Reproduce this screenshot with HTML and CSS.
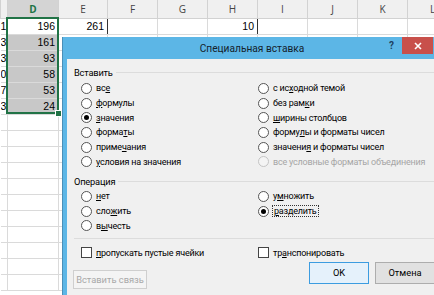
FILE: index.html
```html
<!DOCTYPE html>
<html lang="ru">
<head>
<meta charset="UTF-8">
<title>Специальная вставка</title>
<link rel="stylesheet" href="styles.css">
</head>
<body>

<!-- worksheet behind the dialog -->
<table class="sheet">
    <colgroup>
        <col class="w-c"><col class="w-d"><col class="w-e"><col class="w-n"><col class="w-n">
        <col class="w-n"><col class="w-n"><col class="w-n"><col class="w-n"><col class="w-n">
    </colgroup>
    <tr class="head">
        <th></th><th class="sel">D</th><th>E</th><th>F</th><th>G</th><th>H</th><th>I</th><th>J</th><th>K</th><th>L</th>
    </tr>
    <tr><td>1</td><td>196</td><td class="edge">261</td><td></td><td></td><td class="edge">10</td><td></td><td></td><td></td><td></td></tr>
    <tr><td>3</td><td class="g">161</td><td></td><td></td><td></td><td></td><td></td><td></td><td></td><td></td></tr>
    <tr><td>3</td><td class="g">93</td><td></td><td></td><td></td><td></td><td></td><td></td><td></td><td></td></tr>
    <tr><td>0</td><td class="g">58</td><td></td><td></td><td></td><td></td><td></td><td></td><td></td><td></td></tr>
    <tr><td>7</td><td class="g">53</td><td></td><td></td><td></td><td></td><td></td><td></td><td></td><td></td></tr>
    <tr><td>3</td><td class="g">24</td><td></td><td></td><td></td><td></td><td></td><td></td><td></td><td></td></tr>
    <tr><td></td><td></td><td></td><td></td><td></td><td></td><td></td><td></td><td></td><td></td></tr>
    <tr><td></td><td></td><td></td><td></td><td></td><td></td><td></td><td></td><td></td><td></td></tr>
    <tr><td></td><td></td><td></td><td></td><td></td><td></td><td></td><td></td><td></td><td></td></tr>
    <tr><td></td><td></td><td></td><td></td><td></td><td></td><td></td><td></td><td></td><td></td></tr>
    <tr><td></td><td></td><td></td><td></td><td></td><td></td><td></td><td></td><td></td><td></td></tr>
    <tr><td></td><td></td><td></td><td></td><td></td><td></td><td></td><td></td><td></td><td></td></tr>
    <tr><td></td><td></td><td></td><td></td><td></td><td></td><td></td><td></td><td></td><td></td></tr>
    <tr><td></td><td></td><td></td><td></td><td></td><td></td><td></td><td></td><td></td><td></td></tr>
    <tr><td></td><td></td><td></td><td></td><td></td><td></td><td></td><td></td><td></td><td></td></tr>
    <tr><td></td><td></td><td></td><td></td><td></td><td></td><td></td><td></td><td></td><td></td></tr>
    <tr><td></td><td></td><td></td><td></td><td></td><td></td><td></td><td></td><td></td><td></td></tr>
</table>

<!-- green selection frame D1:D6 -->
<div class="selection"><span class="handle"></span></div>

<!-- Paste special dialog -->
<div class="dialog">
    <div class="titlebar">
        <span class="title">Специальная вставка</span>
        <span class="help">?</span>
        <span class="close">
            <svg width="8" height="8" viewBox="0 0 8 8"><path d="M1 1L7 7M7 1L1 7" stroke="#fff" stroke-width="1.6"/></svg>
        </span>
    </div>

    <div class="body">
        <div class="group">Вставить</div>
        <div class="opts">
            <div class="opt"><i class="radio"></i>вс<u>е</u></div>
            <div class="opt"><i class="radio"></i>с ис<u>х</u>одной темой</div>
            <div class="opt"><i class="radio"></i><u>ф</u>ормулы</div>
            <div class="opt"><i class="radio"></i>без рам<u>к</u>и</div>
            <div class="opt"><i class="radio on"></i><u>з</u>начения</div>
            <div class="opt"><i class="radio"></i><u>ш</u>ирины столбцов</div>
            <div class="opt"><i class="radio"></i>форма<u>т</u>ы</div>
            <div class="opt"><i class="radio"></i>форму<u>л</u>ы и форматы чисел</div>
            <div class="opt"><i class="radio"></i>приме<u>ч</u>ания</div>
            <div class="opt"><i class="radio"></i>значени<u>я</u>&nbsp;и форматы чисел</div>
            <div class="opt"><i class="radio"></i><u>у</u>словия на значения</div>
            <div class="opt off"><i class="radio"></i>все условные форматы объединения</div>
        </div>

        <div class="group op">Операция</div>
        <div class="opts">
            <div class="opt"><i class="radio"></i><u>н</u>ет</div>
            <div class="opt"><i class="radio"></i>у<u>м</u>ножить</div>
            <div class="opt"><i class="radio"></i>сло<u>ж</u>ить</div>
            <div class="opt"><i class="radio on"></i><span class="focus"><u>р</u>азделить</span></div>
            <div class="opt"><i class="radio"></i>в<u>ы</u>честь</div>
            <div class="opt"></div>
        </div>

        <div class="sep"></div>

        <div class="opts">
            <div class="opt"><i class="check"></i><u>п</u>ропускать пустые ячейки</div>
            <div class="opt"><i class="check"></i>тр<u>а</u>нспонировать</div>
        </div>

        <div class="buttons">
            <button class="btn link" disabled>Вставить связь</button>
            <button class="btn ok">OK</button>
            <button class="btn">Отмена</button>
        </div>
    </div>
</div>

</body>
</html>
```

FILE: styles.css
```css
body {
    margin: 0;
    width: 434px;
    height: 295px;
    overflow: hidden;
    position: relative;
    background: #ffffff;
    font-family: Roboto, "Open Sans", sans-serif;
}

/* worksheet */
.sheet {
    border-collapse: collapse;
    table-layout: fixed;
    width: 458px;
    font-family: "Liberation Sans", Arial, sans-serif;
    font-size: 10.5px;
    color: #000;
}
.w-c { width: 7px; }
.w-d { width: 51px; }
.w-e { width: 49px; }
.w-n { width: 50px; }

.sheet tr { height: 16px; }
.sheet tr.head { height: 18px; }

.sheet th {
    padding: 0;
    background: #f0f0f0;
    border: 1px solid #d2d2d2;
    border-top: none;
    color: #444;
    font-family: "Open Sans", sans-serif;
    font-size: 10px;
    font-weight: normal;
}
.sheet th.sel {
    background: #d4d4d4;
    color: #217346;
    font-weight: bold;
    border-bottom: 2px solid #217346;
}

.sheet td {
    padding: 0 3px 0 0;
    border: 1px solid #dadada;
    text-align: right;
    white-space: nowrap;
    overflow: hidden;
    line-height: 14px;
}
.sheet td:first-child { padding-right: 2px; border-left: none; }
.sheet td.g {
    background: #c8c8c8;
    border-top-color: #8e8e8e;
}
.sheet td.edge { border-right-color: #333; }

/* selection frame over the sheet */
.selection {
    position: absolute;
    left: 6px;
    top: 17px;
    width: 49px;
    height: 93px;
    border: 2px solid #217346;
}
.handle {
    position: absolute;
    right: -5px;
    bottom: -5px;
    width: 5px;
    height: 5px;
    background: #217346;
    border: 1px solid #fff;
}

/* dialog */
.dialog {
    position: absolute;
    left: 62px;
    top: 37px;
    width: 378px;
    height: 280px;
    background: #5cb6e6;
    border-left: 1px solid #4a8fb8;
    display: flex;
    flex-direction: column;
}

.titlebar {
    height: 22px;
    position: relative;
}
.title {
    position: absolute;
    left: 0;
    right: 0;
    top: 6px;
    text-align: center;
    font-size: 10.2px;
    color: #14222c;
}
.help {
    position: absolute;
    left: 326px;
    top: 3px;
    font-size: 10px;
    font-weight: bold;
    color: #1d3e5e;
}
.close {
    position: absolute;
    left: 339px;
    top: 0;
    width: 31px;
    height: 17px;
    background: #c8504b;
    display: flex;
    align-items: center;
    justify-content: center;
}

.body {
    flex: 1;
    margin-left: 4px;
    background: #f0f0f0;
    padding: 6px 0 0 7px;
    font-size: 9px;
    letter-spacing: -0.2px;
    color: #000;
}

.group {
    display: flex;
    align-items: center;
    gap: 3px;
    height: 14px;
    margin-bottom: 2px;
    font-size: 9.3px;
}
.group::after {
    content: "";
    flex: 1;
    border-top: 1px solid #dcdcdc;
}
.group.op {
    margin-top: 5px;
    margin-bottom: 1px;
}

.opts {
    display: grid;
    grid-template-columns: 177px 1fr;
    grid-auto-rows: 14.7px;
    padding-left: 7px;
}
.opt {
    display: flex;
    align-items: center;
    white-space: nowrap;
}
.opt.off { color: #a6a6a6; }

.radio {
    width: 9px;
    height: 9px;
    border: 1px solid #555;
    border-radius: 50%;
    background: #fff;
    margin-right: 4px;
    display: flex;
    align-items: center;
    justify-content: center;
}
.radio.on::after {
    content: "";
    width: 5px;
    height: 5px;
    border-radius: 50%;
    background: #000;
}
.opt.off .radio {
    border-color: #c4c4c4;
    background: #f4f4f4;
}

.check {
    width: 9px;
    height: 9px;
    border: 1px solid #444;
    background: #fff;
    margin-right: 4px;
}

.focus {
    outline: 1px dotted #333;
    padding: 0 1px;
}

.sep {
    border-top: 1px solid #dcdcdc;
    margin: 5px 0 6px;
}

.buttons {
    display: flex;
    align-items: flex-start;
    margin-top: 2px;
    padding-right: 6px;
}
.btn {
    height: 22px;
    width: 60px;
    font-family: Roboto, sans-serif;
    font-size: 9.3px;
    color: #000;
    background: #e1e1e1;
    border: 1px solid #adadad;
    padding: 0;
}
.btn.link {
    width: 74px;
    height: 19px;
    margin: 8px auto 0 -1px;
    background: #f4f4f4;
    border-color: #cfcfcf;
    color: #a8a8a8;
}
.btn.ok {
    margin-right: 6px;
    background: #e5f1fb;
    border-color: #3c9ce0;
}
```
